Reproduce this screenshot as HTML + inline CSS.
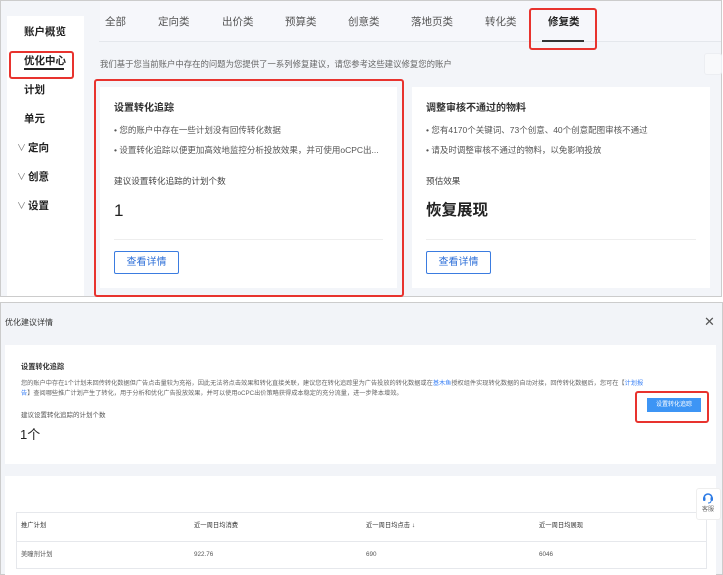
<!DOCTYPE html>
<html><head><meta charset="utf-8"><style>
*{margin:0;padding:0;box-sizing:border-box}
body{width:723px;height:575px;background:#fff;font-family:"Liberation Sans","Noto Sans CJK SC",sans-serif;color:#333;position:relative;overflow:hidden}
.abs{position:absolute}
.t{position:absolute;white-space:nowrap;line-height:1}
.si{position:absolute;font-size:10.5px;color:#222;font-weight:bold;line-height:1;white-space:nowrap}
.tab{position:absolute;top:17px;font-size:10.5px;color:#555;line-height:1;white-space:nowrap}
.red{position:absolute;border:2px solid #e8332e;border-radius:3px}
.btn{position:absolute;width:65px;height:23px;border:1px solid #3b7ce0;border-radius:2px;color:#2d6fd8;font-size:10px;text-align:center;line-height:21px}
.chev{font-weight:normal;color:#777;font-size:9px;position:absolute;left:-11px;top:1px}
</style></head><body>
<div class="abs" style="left:0;top:0;width:722px;height:297px;border:1px solid #ccc;background:#f3f5f9"></div>
<div class="abs" style="left:7px;top:16px;width:77px;height:280px;background:#fff"></div>
<div class="si" style="left:24px;top:27px">账户概览</div>
<div class="si" style="left:24px;top:56px">优化中心</div>
<div class="abs" style="left:24px;top:68px;width:40px;height:2px;background:#222"></div>
<div class="red" style="left:9px;top:51px;width:65px;height:28px"></div>
<div class="si" style="left:24px;top:85px">计划</div>
<div class="si" style="left:24px;top:114px">单元</div>
<div class="si" style="left:28px;top:143px"><span class="chev">∨</span>定向</div>
<div class="si" style="left:28px;top:172px"><span class="chev">∨</span>创意</div>
<div class="si" style="left:28px;top:201px"><span class="chev">∨</span>设置</div>

<div class="abs" style="left:100px;top:1px;width:621px;height:40px;background:#f6f7fb"></div>
<div class="abs" style="left:99px;top:41px;width:622px;height:1px;background:#e4e7ec"></div>
<div class="tab" style="left:105px">全部</div>
<div class="tab" style="left:158px">定向类</div>
<div class="tab" style="left:222px">出价类</div>
<div class="tab" style="left:285px">预算类</div>
<div class="tab" style="left:348px">创意类</div>
<div class="tab" style="left:411px">落地页类</div>
<div class="tab" style="left:485px">转化类</div>
<div class="tab" style="left:548px;color:#222;font-weight:bold">修复类</div>
<div class="abs" style="left:542px;top:40px;width:42px;height:2px;background:#333"></div>
<div class="red" style="left:529px;top:8px;width:68px;height:42px"></div>
<div class="t" style="left:100px;top:60px;font-size:8.4px;color:#666">我们基于您当前账户中存在的问题为您提供了一系列修复建议，请您参考这些建议修复您的账户</div>
<div class="abs" style="left:704px;top:53px;width:18px;height:22px;background:#f8f9fb;border:1px solid #eceef2;border-radius:3px"></div>

<div class="abs" style="left:100px;top:87px;width:297px;height:201px;background:#fff"></div>
<div class="t" style="left:114px;top:104px;font-size:10px;font-weight:bold;color:#333">设置转化追踪</div>
<div class="t" style="left:114px;top:126px;font-size:8.5px;color:#555">• 您的账户中存在一些计划没有回传转化数据</div>
<div class="t" style="left:114px;top:146px;font-size:8.5px;color:#555">• 设置转化追踪以便更加高效地监控分析投放效果，并可使用oCPC出...</div>
<div class="t" style="left:114px;top:177px;font-size:8.6px;color:#444">建议设置转化追踪的计划个数</div>
<div class="t" style="left:114px;top:202px;font-size:17px;color:#222">1</div>
<div class="abs" style="left:114px;top:239px;width:269px;height:1px;background:#eee"></div>
<div class="btn" style="left:114px;top:251px">查看详情</div>
<div class="red" style="left:94px;top:79px;width:310px;height:218px"></div>

<div class="abs" style="left:412px;top:87px;width:298px;height:201px;background:#fff"></div>
<div class="t" style="left:426px;top:104px;font-size:10px;font-weight:bold;color:#333">调整审核不通过的物料</div>
<div class="t" style="left:426px;top:126px;font-size:8.5px;color:#555">• 您有4170个关键词、73个创意、40个创意配图审核不通过</div>
<div class="t" style="left:426px;top:146px;font-size:8.5px;color:#555">• 请及时调整审核不通过的物料，以免影响投放</div>
<div class="t" style="left:426px;top:177px;font-size:8.6px;color:#444">预估效果</div>
<div class="t" style="left:426px;top:203px;font-size:15.5px;color:#222;font-weight:bold">恢复展现</div>
<div class="abs" style="left:426px;top:239px;width:270px;height:1px;background:#eee"></div>
<div class="btn" style="left:426px;top:251px">查看详情</div>

<div class="abs" style="left:0;top:302px;width:723px;height:273px;border:1px solid #ccc;background:#f2f4f8"></div>
<div class="t" style="left:5px;top:319px;font-size:8px;color:#333">优化建议详情</div>
<div class="t" style="left:704px;top:315px;font-size:13px;color:#555">✕</div>
<div class="abs" style="left:5px;top:345px;width:711px;height:119px;background:#fff"></div>
<div class="t" style="left:21px;top:363px;font-size:7.2px;font-weight:bold;color:#333">设置转化追踪</div>
<div class="t" style="left:21px;top:381px;font-size:6.2px;color:#666">您的账户中存在1个计划未回传转化数据但广告点击量较为充裕，因此无法将点击效果和转化直接关联，建议您在转化追踪里为广告投放的转化数据或在<span style="color:#3b82f6">基木鱼</span>授权组件实现转化数据的自动对接，回传转化数据后，您可在【<span style="color:#3b82f6">计划报</span></div>
<div class="t" style="left:21px;top:391px;font-size:6.2px;color:#666"><span style="color:#3b82f6">告</span>】查阅哪些推广计划产生了转化，用于分析和优化广告投放效果，并可以使用oCPC出价策略获得成本稳定的充分流量，进一步降本增效。</div>
<div class="t" style="left:21px;top:413px;font-size:6.5px;color:#555">建议设置转化追踪的计划个数</div>
<div class="t" style="left:20px;top:428px;font-size:13px;color:#222">1个</div>
<div class="abs" style="left:647px;top:398px;width:54px;height:14px;background:#3d95f5;color:#fff;font-size:6px;text-align:center;line-height:14px">设置转化追踪</div>
<div class="red" style="left:635px;top:391px;width:74px;height:32px"></div>
<div class="abs" style="left:5px;top:476px;width:711px;height:99px;background:#fff"></div>
<div class="abs" style="left:16px;top:512px;width:691px;height:57px;border:1px solid #e6e8ec"></div>
<div class="abs" style="left:17px;top:541px;width:689px;height:1px;background:#e6e8ec"></div>
<div class="t" style="left:21px;top:523px;font-size:6.3px;color:#333">推广计划</div>
<div class="t" style="left:194px;top:523px;font-size:6.3px;color:#333">近一周日均消费</div>
<div class="t" style="left:366px;top:523px;font-size:6.3px;color:#333">近一周日均点击 ↓</div>
<div class="t" style="left:539px;top:523px;font-size:6.3px;color:#333">近一周日均展现</div>
<div class="t" style="left:21px;top:552px;font-size:6.3px;color:#555">美瞳剂计划</div>
<div class="t" style="left:194px;top:552px;font-size:6.3px;color:#555">922.76</div>
<div class="t" style="left:366px;top:552px;font-size:6.3px;color:#555">690</div>
<div class="t" style="left:539px;top:552px;font-size:6.3px;color:#555">6046</div>
<div class="abs" style="left:696px;top:488px;width:25px;height:32px;background:#fff;border:1px solid #eee;border-radius:3px"></div>
<svg class="abs" style="left:701px;top:491px" width="14" height="14" viewBox="0 0 14 14"><path d="M3 7a4 4 0 0 1 8 0" stroke="#2d7be5" stroke-width="1.6" fill="none"/><rect x="2" y="6" width="2.5" height="4" rx="1" fill="#2d7be5"/><rect x="9.5" y="6" width="2.5" height="4" rx="1" fill="#2d7be5"/><path d="M10 10q0 2-3 2" stroke="#2d7be5" stroke-width="1" fill="none"/></svg>
<div class="t" style="left:702px;top:507px;font-size:6px;color:#666">客服</div>
</body></html>
